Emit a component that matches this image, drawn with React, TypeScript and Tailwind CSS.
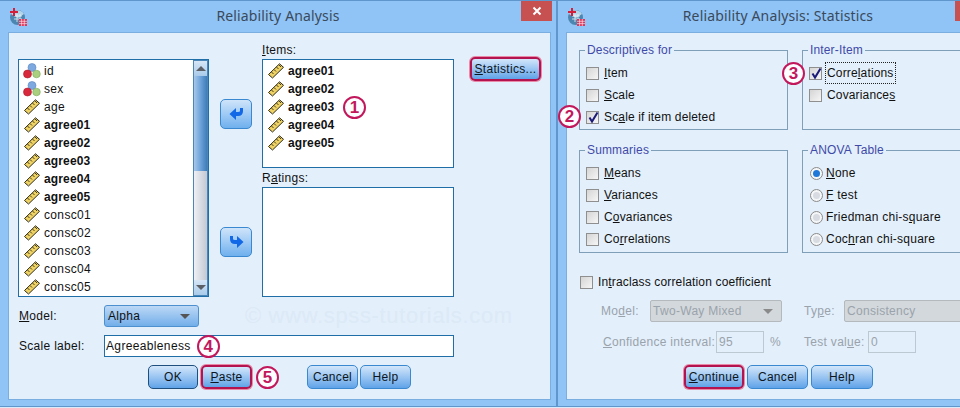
import type { ReactNode } from "react";

const font = "[font-family:'Liberation_Sans',Arial,sans-serif]";

type Variable = { name: string; kind: "nominal" | "scale"; bold?: boolean };

const sourceVars: Variable[] = [
  { name: "id", kind: "nominal" },
  { name: "sex", kind: "nominal" },
  { name: "age", kind: "scale" },
  { name: "agree01", kind: "scale", bold: true },
  { name: "agree02", kind: "scale", bold: true },
  { name: "agree03", kind: "scale", bold: true },
  { name: "agree04", kind: "scale", bold: true },
  { name: "agree05", kind: "scale", bold: true },
  { name: "consc01", kind: "scale" },
  { name: "consc02", kind: "scale" },
  { name: "consc03", kind: "scale" },
  { name: "consc04", kind: "scale" },
  { name: "consc05", kind: "scale" },
];

const itemVars = ["agree01", "agree02", "agree03", "agree04", "agree05"];

function AppIcon() {
  return (
    <svg width="18" height="18" viewBox="0 0 18 18">
      <circle cx="8.5" cy="9.5" r="7.5" fill="#4c86b0" />
      <path d="M2 6 A7.5 7.5 0 0 1 15 6 L9 10 Z" fill="#b4d4ea" />
      <path d="M5 8h8M5 11h8M8 6v8M11 6v8" stroke="#e6f1f8" strokeWidth="0.8" />
      <rect x="1" y="3" width="8" height="2" fill="#d41f3a" />
      <rect x="4" y="0" width="2" height="8" fill="#d41f3a" />
      <rect x="10" y="11" width="8" height="7" fill="#d8365a" />
      <path d="M10 13.3h8M10 15.6h8M12.6 11v7M15.3 11v7" stroke="#fbdbe2" strokeWidth="0.7" />
    </svg>
  );
}

function NominalIcon() {
  return (
    <svg width="18" height="16" viewBox="0 0 18 16" className="shrink-0">
      <circle cx="9" cy="4.5" r="4" fill="#7ea9e0" stroke="#5a86c0" strokeWidth="0.6" />
      <circle cx="13.5" cy="11" r="3.8" fill="#a9cf7f" stroke="#7ea75a" strokeWidth="0.6" />
      <circle cx="4.5" cy="11" r="4" fill="#d8283c" stroke="#a81c2c" strokeWidth="0.6" />
    </svg>
  );
}

function RulerIcon() {
  return (
    <svg width="18" height="16" viewBox="0 0 18 16" className="shrink-0">
      <path d="M1.5 11.5 L12.5 0.8 L16.5 4.3 L5.5 15 Z" fill="#eed264" stroke="#2f2a18" strokeWidth="1" />
      <path d="M4.5 9 L6.5 11 M7 6.5 L9 8.5 M9.5 4 L11.5 6 M12 2 L14 4" stroke="#4a4220" strokeWidth="1" />
    </svg>
  );
}

function VarRow({ v }: { v: Variable }) {
  return (
    <div className="flex h-[18px] items-center gap-[3px]">
      {v.kind === "nominal" ? <NominalIcon /> : <RulerIcon />}
      <span className={`text-[#111] ${v.bold ? "font-bold tracking-[0.15px]" : "tracking-[0.35px]"}`}>{v.name}</span>
    </div>
  );
}

function Marker({ n, className = "" }: { n: number; className?: string }) {
  return (
    <span
      className={`flex h-[23px] w-[23px] shrink-0 items-center justify-center rounded-full border-2 border-[#c2185b] bg-[#fbfdff] text-[17px] font-bold text-[#c2185b] ${className}`}
    >
      {n}
    </span>
  );
}

function DialogButton({
  children,
  width,
  marked,
  dark,
}: {
  children: ReactNode;
  width: string;
  marked?: boolean;
  dark?: boolean;
}) {
  const border = marked
    ? "border-2 border-[#b3134f] shadow-[0_0_0_1px_#e88aa8]"
    : dark
      ? "border border-[#1f4f7e]"
      : "border border-[#3a88cf]";
  return (
    <div
      className={`flex h-[24px] items-center justify-center rounded-[5px] bg-gradient-to-b from-[#d3e6fa] to-[#5fa3e8] tracking-[0.3px] text-[#0d1620] ${width} ${border}`}
    >
      <span>{children}</span>
    </div>
  );
}

function ArrowButton({ flip }: { flip?: boolean }) {
  return (
    <div className="flex h-[30px] w-[32px] items-center justify-center rounded-[5px] border border-[#3a88cf] bg-gradient-to-b from-[#cfe4fa] to-[#6fb0ee]">
      <svg width="15" height="14" viewBox="0 0 15 14">
        {flip ? (
          <path d="M1 1 H4 V4 Q4 5 6 5 H8 V1 L14.5 7 L8 13 V9 H6 Q1 9 1 4 Z" fill="#1268e6" />
        ) : (
          <path d="M14 1 H11 V4 Q11 5 9 5 H7 V1 L0.5 7 L7 13 V9 H9 Q14 9 14 4 Z" fill="#1268e6" />
        )}
      </svg>
    </div>
  );
}

function Scrollbar() {
  return (
    <div className="flex w-[15px] shrink-0 flex-col border border-[#4b86b8] bg-gradient-to-r from-[#eef0f5] to-[#c4c8d2]">
      <div className="flex h-[15px] items-center justify-center bg-gradient-to-b from-[#d6e6f6] to-[#a9cbea]">
        <div className="h-0 w-0 border-x-[5px] border-b-[5px] border-x-transparent border-b-[#5b5f66]" />
      </div>
      <div className="h-[95px] bg-gradient-to-r from-[#a8c8ea] via-[#6da3da] to-[#3f7db8]" />
      <div className="flex-1" />
      <div className="flex h-[15px] items-center justify-center bg-gradient-to-b from-[#d6e6f6] to-[#a9cbea]">
        <div className="h-0 w-0 border-x-[5px] border-t-[5px] border-x-transparent border-t-[#5b5f66]" />
      </div>
    </div>
  );
}

function Check({ checked }: { checked?: boolean }) {
  return (
    <span className="relative h-[13px] w-[13px] shrink-0 border border-[#8f8f8f] bg-gradient-to-br from-[#d5d5d5] to-[#f6f6f6]">
      {checked && (
        <svg width="13" height="13" viewBox="0 0 13 13" className="absolute left-0 top-[-1px]">
          <path d="M2.5 6.5 L5 10.5 L10.5 1.5" fill="none" stroke="#1a1a7a" strokeWidth="2" />
        </svg>
      )}
    </span>
  );
}

function CheckRow({ label, checked, focus }: { label: ReactNode; checked?: boolean; focus?: boolean }) {
  return (
    <div className="flex h-[22px] items-center gap-[5px]">
      <Check checked={checked} />
      <span className={`tracking-[0.15px] text-[#111] ${focus ? "px-[1px] -mx-[1px] py-[4px] outline-1 outline-dotted outline-[#222]" : ""}`}>
        {label}
      </span>
    </div>
  );
}

function RadioRow({ label, on }: { label: ReactNode; on?: boolean }) {
  return (
    <div className="ml-[1px] flex h-[22px] items-center gap-[3px]">
      <span className="flex h-[13px] w-[13px] shrink-0 items-center justify-center rounded-full border border-[#8a8a8a] bg-[#f4f6f8]">
        <span className={`h-[7px] w-[7px] rounded-full ${on ? "bg-[#1f78d8]" : "bg-[#d8dce2]"}`} />
      </span>
      <span className="tracking-[0.25px] text-[#111]">{label}</span>
    </div>
  );
}

function Group({ title, width, height, children }: { title: string; width: string; height: string; children: ReactNode }) {
  return (
    <div className={`relative shrink-0 border border-[#7f9fb8] pl-[6px] pt-[11px] ${width} ${height}`}>
      <span className="absolute left-[5px] top-[-7px] bg-[#e3effb] px-[2px] tracking-[0.15px] text-[#3f4aa8]">{title}</span>
      {children}
    </div>
  );
}

function TitleBar({ title, closeMargin }: { title: string; closeMargin: string }) {
  return (
    <div className="grid h-[31px] grid-cols-[1fr_auto_1fr] items-center">
      <div className="pl-[9px] pt-[1px]">
        <AppIcon />
      </div>
      <div className="pb-[1px] text-[14px] tracking-[0.15px] text-[#3a4a5a] [font-family:'Noto_Sans',sans-serif]">{title}</div>
      <div className={`flex h-[20px] w-[31px] items-center justify-center self-start justify-self-end bg-[#c75050] ${closeMargin}`}>
        <svg width="10" height="10" viewBox="0 0 10 10">
          <path d="M1.5 1.5 L8.5 8.5 M8.5 1.5 L1.5 8.5" stroke="#fff" strokeWidth="2" />
        </svg>
      </div>
    </div>
  );
}

function ReliabilityDialog() {
  return (
    <div className="relative h-[407px] w-[558px] shrink-0 border-b border-r-2 border-t border-[#5f97cc] bg-[#90c3f6]">
      <TitleBar title="Reliability Analysis" closeMargin="mr-[4px]" />
      <div className="relative ml-[8px] h-[368px] w-[543px] border border-[#7aaee0] bg-[#e3effb] pl-[9px] pt-[10px]">
        <div className="flex">
          <div className="w-[191px] pt-[16px]">
            <div className="flex h-[238px] border border-[#1f6ea8] bg-white">
              <div className="flex-1 pl-[4px] pt-[2px]">
                {sourceVars.map((v) => (
                  <VarRow key={v.name} v={v} />
                ))}
              </div>
              <Scrollbar />
            </div>
          </div>
          <div className="ml-[11px] flex w-[32px] flex-col gap-[98px] pt-[56px]">
            <ArrowButton />
            <ArrowButton flip />
          </div>
          <div className="ml-[10px] w-[192px]">
            <div className="h-[16px] pt-[1px] tracking-[0.3px] text-[#111]">
              <u>I</u>tems:
            </div>
            <div className="relative h-[109px] border border-[#1f6ea8] bg-white pl-[4px] pt-[2px]">
              {itemVars.map((name) => (
                <VarRow key={name} v={{ name, kind: "scale", bold: true }} />
              ))}
              <Marker n={1} className="absolute left-[80px] top-[36px]" />
            </div>
            <div className="mt-[3px] h-[16px] pt-[1px] tracking-[0.3px] text-[#111]">
              R<u>a</u>tings:
            </div>
            <div className="h-[110px] border border-[#1f6ea8] bg-white" />
          </div>
          <div className="ml-[16px] w-[71px] pt-[14px]">
            <DialogButton width="w-[71px]" marked>
              <u>S</u>tatistics...
            </DialogButton>
          </div>
        </div>
        <div className="mt-[8px] flex items-center">
          <div className="w-[86px] pl-[1px] tracking-[0.3px] text-[#111]">
            <u>M</u>odel:
          </div>
          <div className="flex h-[22px] w-[95px] items-center justify-between rounded-[3px] border border-[#4c90d0] bg-gradient-to-b from-[#bcd8f5] to-[#72aeea] pl-[3px] pr-[8px] tracking-[0.3px] text-[#111]">
            <span>Alpha</span>
            <div className="h-0 w-0 border-x-[5px] border-t-[5px] border-x-transparent border-t-[#555]" />
          </div>
        </div>
        <div className="mt-[8px] flex items-center">
          <div className="w-[86px] pl-[1px] tracking-[0.3px] text-[#111]">Scale label:</div>
          <div className="relative flex h-[22px] w-[350px] items-center border border-[#1f6ea8] bg-white pl-[1px] tracking-[0.35px] text-[#111]">
            Agreeableness
            <Marker n={4} className="absolute left-[92px] top-[-1px]" />
          </div>
        </div>
        <div className="ml-[130px] mt-[8px] flex items-center">
          <DialogButton width="w-[50px]" dark>
            OK
          </DialogButton>
          <div className="ml-[3px]">
            <DialogButton width="w-[51px]" marked>
              <u>P</u>aste
            </DialogButton>
          </div>
          <Marker n={5} className="ml-[4px]" />
          <div className="ml-[28px] flex gap-[2px]">
            <DialogButton width="w-[51px]">Cancel</DialogButton>
            <DialogButton width="w-[51px]">Help</DialogButton>
          </div>
        </div>
        <div className="absolute left-[236px] top-[272px] text-[22px] tracking-[0.65px] text-[#dce9f6] select-none">
          © www.spss-tutorials.com
        </div>
      </div>
    </div>
  );
}

function StatisticsDialog() {
  return (
    <div className="h-[407px] w-[440px] shrink-0 border-b border-t border-[#5f97cc] bg-[#90c3f6]">
      <TitleBar title="Reliability Analysis: Statistics" closeMargin="mr-[12px]" />
      <div className="ml-[8px] h-[368px] w-[430px] border border-[#7aaee0] bg-[#e3effb] pl-[12px] pt-[17px]">
        <div className="flex gap-[14px]">
          <div className="relative">
            <Group title="Descriptives for" width="w-[209px]" height="h-[80px]">
              <CheckRow label={<><u>I</u>tem</>} />
              <CheckRow label={<><u>S</u>cale</>} />
              <CheckRow label={<>Sc<u>a</u>le if item deleted</>} checked />
            </Group>
            <Marker n={2} className="absolute left-[-21px] top-[55px]" />
          </div>
          <div className="relative">
            <Group title="Inter-Item" width="w-[170px]" height="h-[80px]">
              <CheckRow label={<>Corre<u>l</u>ations</>} checked focus />
              <CheckRow label={<>Covariance<u>s</u></>} />
            </Group>
            <Marker n={3} className="absolute left-[-20px] top-[12px]" />
          </div>
        </div>
        <div className="mt-[20px] flex gap-[14px]">
          <Group title="Summaries" width="w-[209px]" height="h-[103px]">
            <CheckRow label={<><u>M</u>eans</>} />
            <CheckRow label={<><u>V</u>ariances</>} />
            <CheckRow label={<>C<u>o</u>variances</>} />
            <CheckRow label={<>Co<u>r</u>relations</>} />
          </Group>
          <Group title="ANOVA Table" width="w-[170px]" height="h-[103px]">
            <RadioRow label={<><u>N</u>one</>} on />
            <RadioRow label={<><u>F</u> test</>} />
            <RadioRow label={<>Friedman chi-s<u>q</u>uare</>} />
            <RadioRow label={<>Coc<u>h</u>ran chi-square</>} />
          </Group>
        </div>
        <div className="ml-[1px] mt-[18px]">
          <CheckRow label={<>In<u>t</u>raclass correlation coefficient</>} />
        </div>
        <div className="mt-[7px] flex items-center tracking-[0.3px] text-[#9aa3ab]">
          <div className="w-[71px] pl-[22px]">
            Mo<u>d</u>el:
          </div>
          <div className="flex h-[22px] w-[132px] items-center justify-between rounded-[2px] border border-[#b4b9bd] bg-[#d3d8dc] pl-[2px] pr-[8px]">
            <span>Two-Way Mixed</span>
            <div className="h-0 w-0 border-x-[5px] border-t-[5px] border-x-transparent border-t-[#8a8a8a]" />
          </div>
          <div className="ml-[22px] w-[40px]">
            Ty<u>p</u>e:
          </div>
          <div className="flex h-[22px] w-[132px] items-center rounded-[2px] border border-[#b4b9bd] bg-[#d3d8dc] pl-[2px]">
            Consistency
          </div>
        </div>
        <div className="mt-[9px] flex items-center tracking-[0.3px] text-[#9aa3ab]">
          <div className="w-[137px] pl-[24px]">
            <u>C</u>onfidence interval:
          </div>
          <div className="flex h-[22px] w-[48px] items-center border border-[#bcc8d2] pl-[2px]">95</div>
          <div className="ml-[6px] w-[34px]">%</div>
          <div className="w-[64px]">
            Test val<u>u</u>e:
          </div>
          <div className="flex h-[22px] w-[48px] items-center border border-[#bcc8d2] pl-[2px]">0</div>
        </div>
        <div className="ml-[105px] mt-[12px] flex gap-[3px]">
          <DialogButton width="w-[60px]" marked>
            <u>C</u>ontinue
          </DialogButton>
          <DialogButton width="w-[61px]">Cancel</DialogButton>
          <DialogButton width="w-[62px]">Help</DialogButton>
        </div>
      </div>
    </div>
  );
}

export default function App() {
  return (
    <div className={`flex h-[408px] w-[960px] overflow-hidden bg-[#dcebfa] text-[12px] leading-none ${font}`}>
      <ReliabilityDialog />
      <StatisticsDialog />
    </div>
  );
}
